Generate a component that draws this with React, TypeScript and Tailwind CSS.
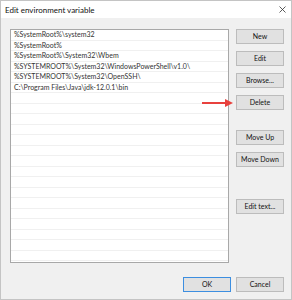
import React from "react";

const paths = [
  "%SystemRoot%\\system32",
  "%SystemRoot%",
  "%SystemRoot%\\System32\\Wbem",
  "%SYSTEMROOT%\\System32\\WindowsPowerShell\\v1.0\\",
  "%SYSTEMROOT%\\System32\\OpenSSH\\",
  "C:\\Program Files\\Java\\jdk-12.0.1\\bin",
];

const rows = [...paths, ...Array(16).fill("")];

function Btn({ label, primary }: { label: string; primary?: boolean }) {
  return (
    <div
      className={`flex h-[15px] w-[48px] items-center justify-center bg-[#e1e1e1] text-[7px] leading-none text-[#111] ${
        primary ? "border-[1.5px] border-[#3c8ee0]" : "border border-[#bcbcbc]"
      }`}
    >
      {label}
    </div>
  );
}

export default function App() {
  return (
    <div
      className="flex h-[300px] w-[292px] flex-col border border-[#c4c4c4] bg-[#f0f0f0]"
      style={{ fontFamily: 'Lato, "Noto Sans", sans-serif' }}
    >
      <div className="flex h-[17px] items-center justify-between bg-white pl-[4px] pr-[5px]">
        <span className="text-[8px] leading-none text-[#111]">Edit environment variable</span>
        <svg width="7" height="7" viewBox="0 0 7 7" className="text-[#333]">
          <path d="M0.5 0.5 L6.5 6.5 M6.5 0.5 L0.5 6.5" stroke="currentColor" strokeWidth="0.8" />
        </svg>
      </div>

      <div className="flex flex-1 flex-col pl-[9px] pr-[7px] pb-[7px] pt-[11px]">
        <div className="flex gap-[7px]">
          <div className="h-[234px] w-[219px] overflow-hidden border border-[#a8a8a8] bg-white">
            {rows.map((r, i) => (
              <div
                key={i}
                className="flex h-[10.5px] items-center border-b border-[#f0f0f0] pl-[3px] text-[7px] leading-none text-[#333] whitespace-nowrap"
              >
                {r}
              </div>
            ))}
          </div>

          <div className="relative flex flex-col">
            <div className="flex flex-col gap-[7px]">
              <Btn label="New" />
              <Btn label="Edit" />
              <Btn label="Browse..." />
              <Btn label="Delete" />
            </div>
            <div className="mt-[20px] flex flex-col gap-[7px]">
              <Btn label="Move Up" />
              <Btn label="Move Down" />
            </div>
            <div className="mt-[32px]">
              <Btn label="Edit text..." />
            </div>

            <svg
              width="34"
              height="10"
              viewBox="0 0 34 10"
              className="absolute left-[-34px] top-[69px]"
            >
              <path d="M0 5 H25" stroke="#e8413d" strokeWidth="2" />
              <path d="M23 1 L31 5 L23 9 Z" fill="#e8413d" />
            </svg>
          </div>
        </div>

        <div className="mt-auto flex justify-end gap-[5px]">
          <Btn label="OK" primary />
          <Btn label="Cancel" />
        </div>
      </div>
    </div>
  );
}
